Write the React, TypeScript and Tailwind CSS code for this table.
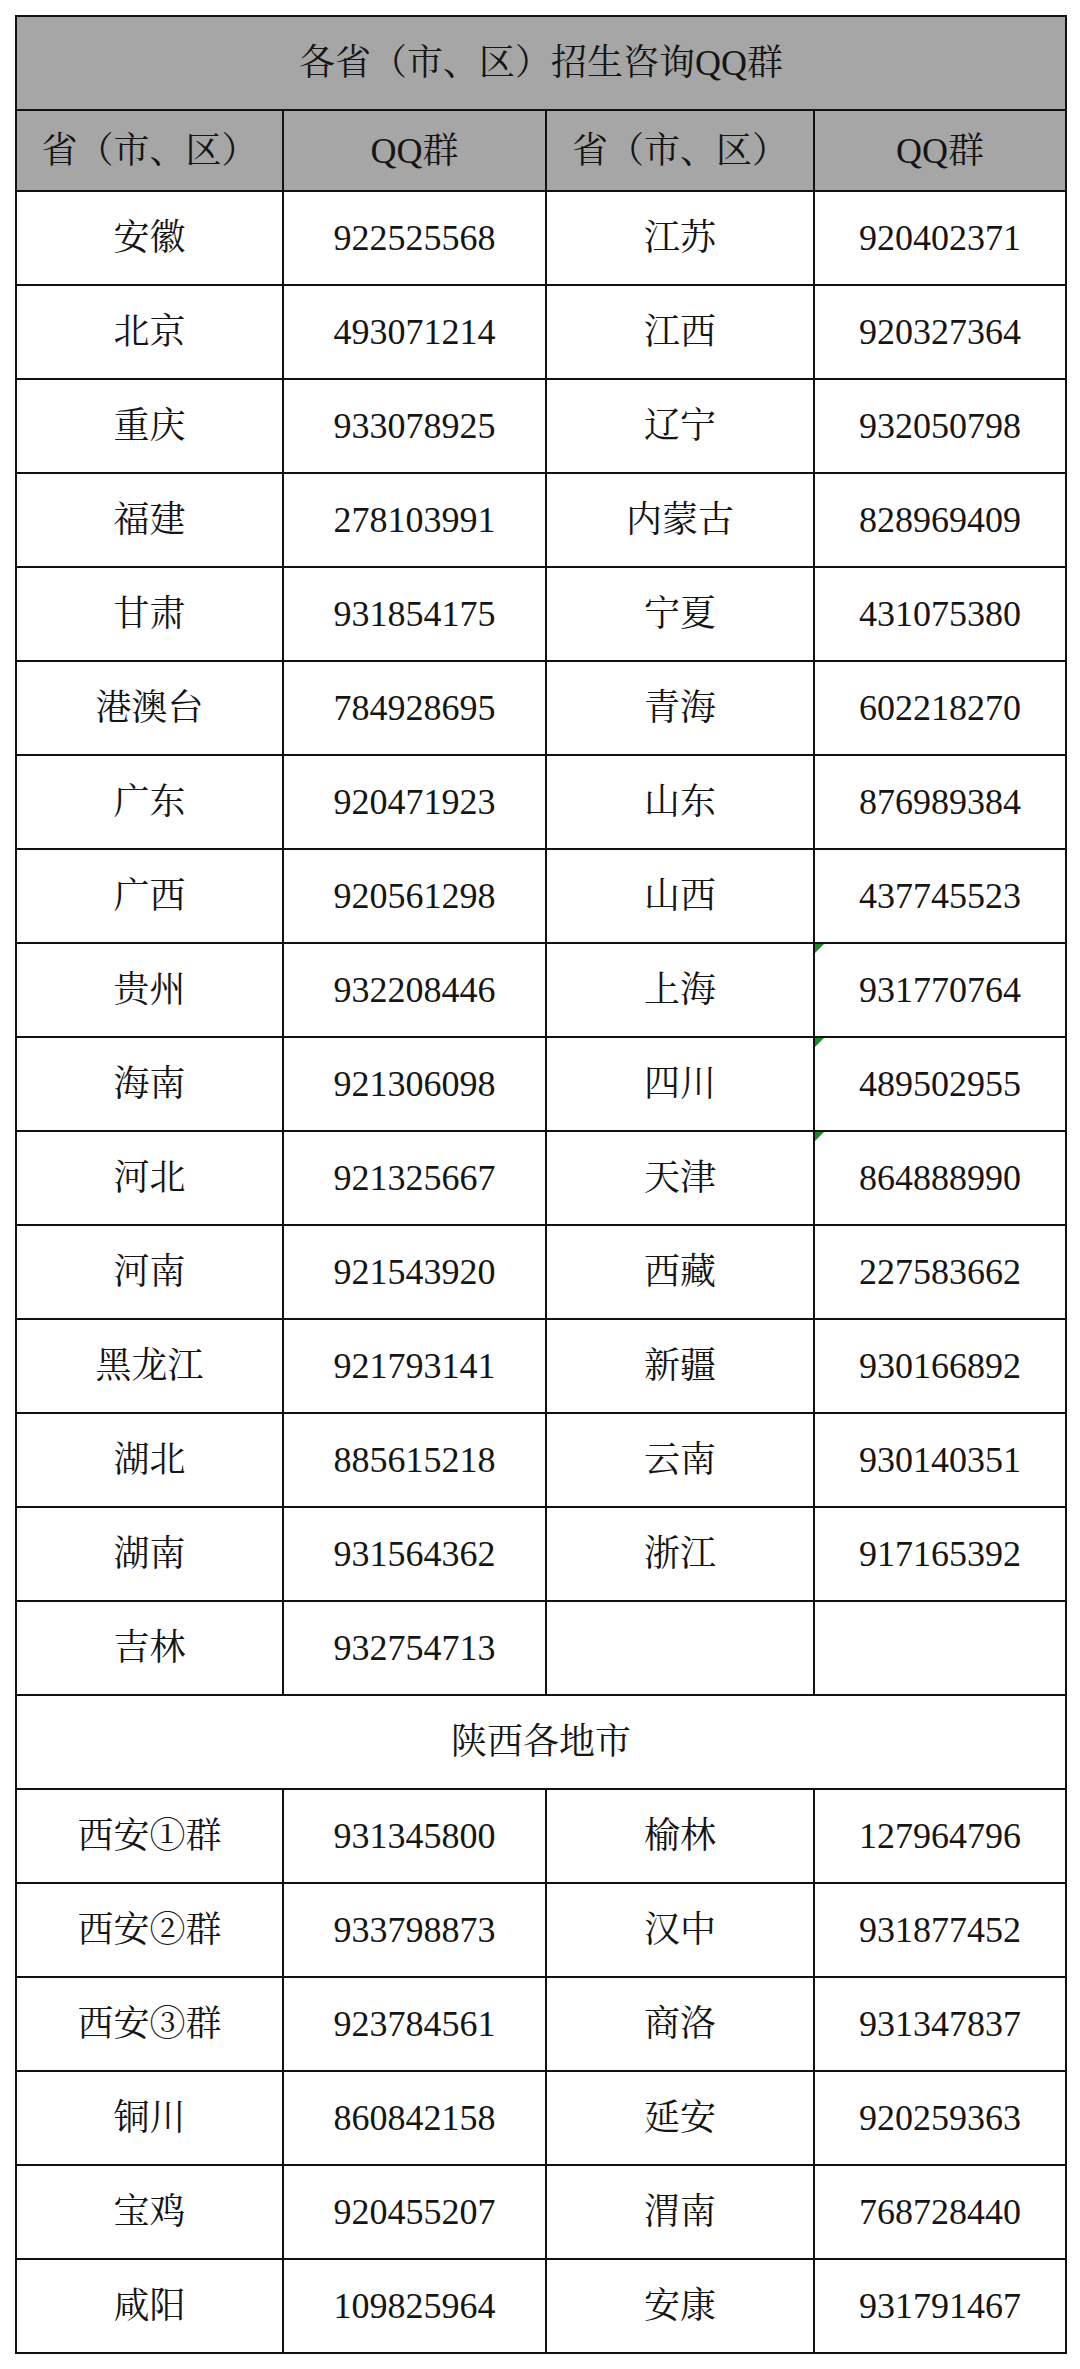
import React from "react";

const provinces: [string, string, string, string][] = [
  ["安徽", "922525568", "江苏", "920402371"],
  ["北京", "493071214", "江西", "920327364"],
  ["重庆", "933078925", "辽宁", "932050798"],
  ["福建", "278103991", "内蒙古", "828969409"],
  ["甘肃", "931854175", "宁夏", "431075380"],
  ["港澳台", "784928695", "青海", "602218270"],
  ["广东", "920471923", "山东", "876989384"],
  ["广西", "920561298", "山西", "437745523"],
  ["贵州", "932208446", "上海", "931770764"],
  ["海南", "921306098", "四川", "489502955"],
  ["河北", "921325667", "天津", "864888990"],
  ["河南", "921543920", "西藏", "227583662"],
  ["黑龙江", "921793141", "新疆", "930166892"],
  ["湖北", "885615218", "云南", "930140351"],
  ["湖南", "931564362", "浙江", "917165392"],
  ["吉林", "932754713", "", ""],
];

const cities: [string, string, string, string][] = [
  ["西安①群", "931345800", "榆林", "127964796"],
  ["西安②群", "933798873", "汉中", "931877452"],
  ["西安③群", "923784561", "商洛", "931347837"],
  ["铜川", "860842158", "延安", "920259363"],
  ["宝鸡", "920455207", "渭南", "768728440"],
  ["咸阳", "109825964", "安康", "931791467"],
];

const marked = new Set(["上海", "四川", "天津"]);

const cell = "border-2 border-[#111] text-center align-middle p-0";

function Row({ r }: { r: [string, string, string, string] }) {
  return (
    <tr className="h-[94px]">
      <td className={cell}>{r[0]}</td>
      <td className={cell}>{r[1]}</td>
      <td className={cell}>{r[2]}</td>
      <td className={`${cell} relative`}>
        {marked.has(r[2]) && (
          <span className="absolute left-0 top-0 w-0 h-0 border-t-[9px] border-r-[9px] border-t-[#1e8a2a] border-r-transparent" />
        )}
        {r[3]}
      </td>
    </tr>
  );
}

export default function App() {
  return (
    <div className="w-[1080px] h-[2369px] bg-white pt-[15px] pl-[15px]">
      <table
        className="table-fixed border-collapse w-[1050px] text-[36px] text-[#151515] leading-none"
        style={{ fontFamily: '"Liberation Serif", "Noto Serif CJK SC", "Noto Sans CJK SC", serif' }}
      >
        <colgroup>
          <col className="w-[267px]" />
          <col className="w-[263px]" />
          <col className="w-[268px]" />
          <col className="w-[252px]" />
        </colgroup>
        <tbody>
          <tr className="h-[94px] bg-[#a6a6a6]">
            <td colSpan={4} className={cell}>
              各省（市、区）招生咨询QQ群
            </td>
          </tr>
          <tr className="h-[81px] bg-[#a6a6a6]">
            <td className={cell}>省（市、区）</td>
            <td className={cell}>QQ群</td>
            <td className={cell}>省（市、区）</td>
            <td className={cell}>QQ群</td>
          </tr>
          {provinces.map((r, i) => (
            <Row key={i} r={r} />
          ))}
          <tr className="h-[94px]">
            <td colSpan={4} className={cell}>
              陕西各地市
            </td>
          </tr>
          {cities.map((r, i) => (
            <Row key={"c" + i} r={r} />
          ))}
        </tbody>
      </table>
    </div>
  );
}
